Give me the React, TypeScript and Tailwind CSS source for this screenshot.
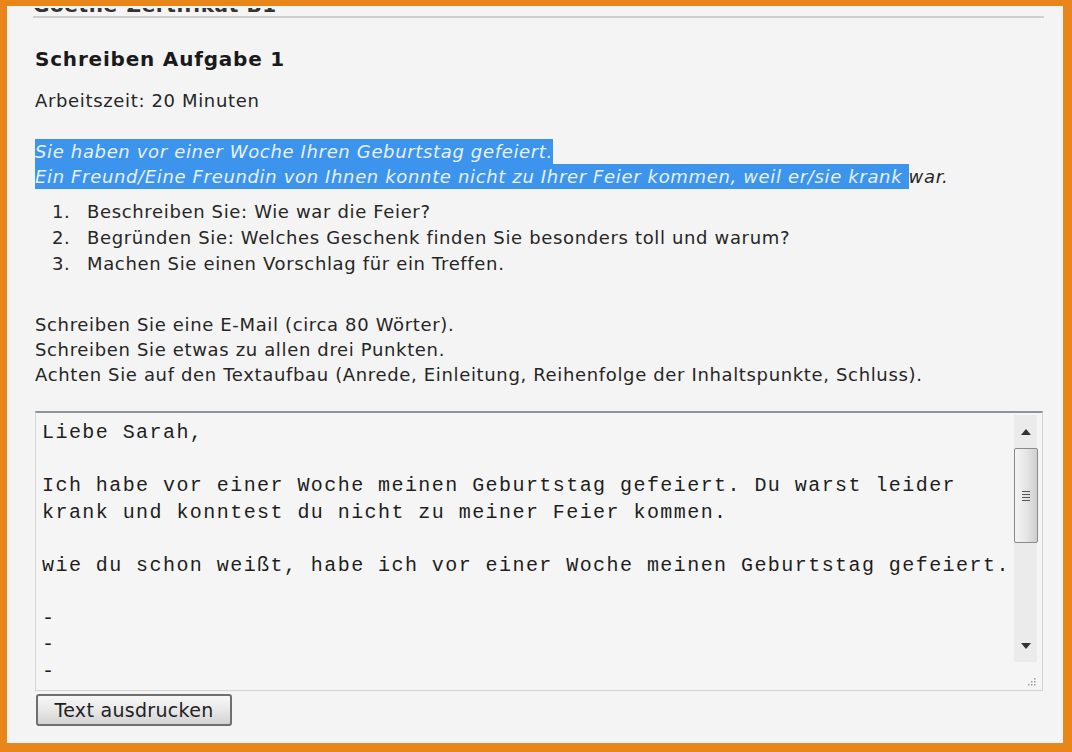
import React from "react";

const emailLines = [
  "Liebe Sarah,",
  "",
  "Ich habe vor einer Woche meinen Geburtstag gefeiert. Du warst leider",
  "krank und konntest du nicht zu meiner Feier kommen.",
  "",
  "wie du schon weißt, habe ich vor einer Woche meinen Geburtstag gefeiert.",
  "",
  "-",
  "-",
  "-",
];

const tasks = [
  "Beschreiben Sie: Wie war die Feier?",
  "Begründen Sie: Welches Geschenk finden Sie besonders toll und warum?",
  "Machen Sie einen Vorschlag für ein Treffen.",
];

function Scrollbar() {
  return (
    <div className="flex flex-col w-[28px] pt-[2px] pr-[5px]">
      <div className="flex flex-col items-center h-[247px] bg-[#ebebeb]">
        {/* up arrow */}
        <div className="h-[33px] flex items-center justify-center">
          <svg width="10" height="6" viewBox="0 0 10 6">
            <path d="M0 6 L5 0 L10 6 Z" fill="#333" />
          </svg>
        </div>
        {/* thumb */}
        <div className="w-[24px] h-[95px] rounded-[2px] border border-[#8a8a8a] bg-gradient-to-r from-[#f4f4f4] via-[#e6e6e6] to-[#cfcfcf] flex items-center justify-center">
          <div className="flex flex-col gap-[2px]">
            <div className="w-[8px] h-[1px] bg-[#555]" />
            <div className="w-[8px] h-[1px] bg-[#555]" />
            <div className="w-[8px] h-[1px] bg-[#555]" />
            <div className="w-[8px] h-[1px] bg-[#555]" />
          </div>
        </div>
        <div className="flex-1" />
        {/* down arrow */}
        <div className="h-[32px] flex items-center justify-center">
          <svg width="10" height="6" viewBox="0 0 10 6">
            <path d="M0 0 L10 0 L5 6 Z" fill="#333" />
          </svg>
        </div>
      </div>
      <div className="flex-1 flex items-end justify-end pb-[4px] pr-[1px]">
        <svg width="9" height="9" viewBox="0 0 9 9">
          <rect x="7" y="1" width="1.5" height="1.5" fill="#9a9a9a" />
          <rect x="4" y="4" width="1.5" height="1.5" fill="#9a9a9a" />
          <rect x="7" y="4" width="1.5" height="1.5" fill="#9a9a9a" />
          <rect x="1" y="7" width="1.5" height="1.5" fill="#9a9a9a" />
          <rect x="4" y="7" width="1.5" height="1.5" fill="#9a9a9a" />
          <rect x="7" y="7" width="1.5" height="1.5" fill="#9a9a9a" />
        </svg>
      </div>
    </div>
  );
}

export default function App() {
  return (
    <div className="w-[1072px] h-[752px] bg-[#e8861a] pt-[6px] pl-[7px] pr-[9px] pb-[9px]">
      <div className="w-full h-full border-2 border-[#eef3f8] bg-[#f4f4f4] overflow-hidden text-[#262626] font-['DejaVu_Sans',Verdana,sans-serif]">
        {/* cut-off header */}
        <div className="h-[8px] overflow-hidden pl-[24px]">
          <div className="-mt-[14px] text-[20px] font-bold text-[#333] leading-[22px] tracking-[0.6px]">
            Goethe-Zertifikat B1
          </div>
        </div>
        <div className="ml-[24px] mr-[17px] h-[2px] bg-[#cfcfcf]" />

        <div className="pl-[26px] pr-[18px] text-[18px] tracking-[0.65px]">
          <h1 className="mt-[29px] text-[20px] font-bold leading-[24px] tracking-[0.8px] text-[#1a1a1a]">
            Schreiben Aufgabe 1
          </h1>
          <p className="mt-[20px] leading-[20px]">Arbeitszeit: 20 Minuten</p>

          <div className="mt-[28px] italic leading-[25px]">
            <div>
              <span className="bg-[#3d94ec] text-[#e6f1ff] py-[2px]">
                Sie haben vor einer Woche Ihren Geburtstag gefeiert.
              </span>
            </div>
            <div>
              <span className="bg-[#3d94ec] text-[#e6f1ff] py-[2px]">
                Ein Freund/Eine Freundin von Ihnen konnte nicht zu Ihrer Feier kommen, weil er/sie krank{" "}
              </span>
              war.
            </div>
          </div>

          <ol className="mt-[10px] leading-[26px]">
            {tasks.map((t, i) => (
              <li key={t} className="flex">
                <span className="w-[52px] pl-[17px]">{i + 1}.</span>
                <span>{t}</span>
              </li>
            ))}
          </ol>

          <div className="mt-[35px] leading-[25px]">
            <p>Schreiben Sie eine E-Mail (circa 80 Wörter).</p>
            <p>Schreiben Sie etwas zu allen drei Punkten.</p>
            <p>Achten Sie auf den Textaufbau (Anrede, Einleitung, Reihenfolge der Inhaltspunkte, Schluss).</p>
          </div>

          <div className="mt-[24px] w-[1008px] h-[280px] border border-[#d4d4d4] border-t-2 border-t-[#8c959e] bg-[#f5f5f5] flex tracking-normal">
            <div className="flex-1 pt-[7px] pl-[6px] font-['Liberation_Mono','Courier_New',monospace] text-[20px] tracking-[1.44px] leading-[26.5px] text-[#1e1e1e] whitespace-pre">
              {emailLines.map((l, i) => (
                <div key={i} className="h-[26.5px]">
                  {l}
                </div>
              ))}
            </div>
            <Scrollbar />
          </div>

          <button className="mt-[3px] ml-[1px] w-[196px] h-[32px] rounded-[3px] border-2 border-[#6f6f6f] bg-gradient-to-b from-[#f7f7f7] via-[#e8e8e8] to-[#d2d2d2] text-[19px] leading-[20px] tracking-[0.3px] text-[#222]">
            Text ausdrucken
          </button>
        </div>
      </div>
    </div>
  );
}
